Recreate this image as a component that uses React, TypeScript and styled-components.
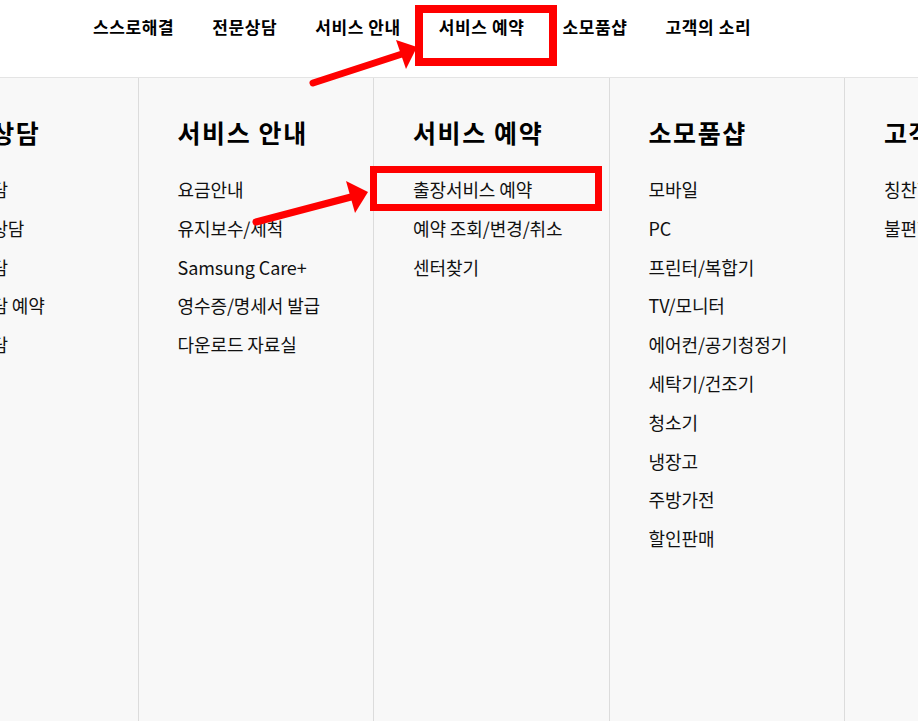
import React from 'react';
import styled, { createGlobalStyle } from 'styled-components';

const GlobalStyle = createGlobalStyle`
    html, body {
        margin: 0;
        padding: 0;
        height: 100%;
        overflow: hidden;
        background: #fff;
    }
    body {
        font-family: "Noto Sans CJK KR", "Noto Sans", sans-serif;
        color: #000;
    }
    #root {
        height: 100%;
    }
`;

const Page = styled.div`
    position: relative;
    height: 100%;
    display: flex;
    flex-direction: column;
`;

const TopNav = styled.nav`
    height: 77px;
    flex: none;
    display: flex;
    align-items: flex-start;
    padding-left: 74px;
    border-bottom: 1px solid #e4e4e4;
    box-sizing: content-box;
`;

const NavItem = styled.a`
    display: block;
    padding: 14px 19px 0;
    font-size: 17px;
    font-weight: 700;
    line-height: 26px;
    letter-spacing: 0.6px;
    color: #000;
    white-space: nowrap;
`;

const Panel = styled.div`
    flex: 1;
    display: flex;
    background: #f8f8f8;
    margin-left: -97px;
    overflow: hidden;
`;

const Column = styled.div`
    flex: none;
    width: 235.5px;
    box-sizing: border-box;
    border-right: 1px solid #dcdcdc;
    padding: 37px 0 0 39px;
    white-space: nowrap;
`;

const Heading = styled.h2`
    margin: 0;
    font-size: 25px;
    font-weight: 700;
    line-height: 34px;
    letter-spacing: 1.6px;
`;

const LinkList = styled.ul`
    list-style: none;
    margin: 21px 0 0;
    padding: 0;
`;

const LinkItem = styled.li`
    font-size: 18px;
    line-height: 38.8px;
    letter-spacing: -0.1px;
    color: #111;
`;

const Overlay = styled.svg`
    position: absolute;
    left: 0;
    top: 0;
    width: 918px;
    height: 721px;
    pointer-events: none;
`;

const columns = [
    { title: '전문상담', links: ['전화상담', '이메일상담', '채팅상담', '화상상담 예약', '원격상담'] },
    { title: '서비스 안내', links: ['요금안내', '유지보수/세척', 'Samsung Care+', '영수증/명세서 발급', '다운로드 자료실'] },
    { title: '서비스 예약', links: ['출장서비스 예약', '예약 조회/변경/취소', '센터찾기'] },
    {
        title: '소모품샵',
        links: ['모바일', 'PC', '프린터/복합기', 'TV/모니터', '에어컨/공기청정기', '세탁기/건조기', '청소기', '냉장고', '주방가전', '할인판매'],
    },
    { title: '고객의 소리', links: ['칭찬합니다', '불편합니다'] },
];

const navItems = ['스스로해결', '전문상담', '서비스 안내', '서비스 예약', '소모품샵', '고객의 소리'];

const Annotations: React.FC = () => (
    <Overlay viewBox="0 0 918 721">
        <rect x="419" y="9" width="134" height="53" fill="none" stroke="#f00" strokeWidth="8" />
        <rect x="373.5" y="169.5" width="225" height="38" fill="none" stroke="#f00" strokeWidth="7" />
        <line x1="313" y1="83" x2="402" y2="54" stroke="#f00" strokeWidth="7" strokeLinecap="round" />
        <polygon points="396,40 417,47 406,69" fill="#f00" />
        <line x1="256" y1="222" x2="351" y2="197" stroke="#f00" strokeWidth="7" strokeLinecap="round" />
        <polygon points="346,181 368,192 355,213" fill="#f00" />
    </Overlay>
);

const App: React.FC = () => (
    <Page>
        <GlobalStyle />
        <TopNav>
            {navItems.map((item) => (
                <NavItem key={item}>{item}</NavItem>
            ))}
        </TopNav>
        <Panel>
            {columns.map((col) => (
                <Column key={col.title}>
                    <Heading>{col.title}</Heading>
                    <LinkList>
                        {col.links.map((link) => (
                            <LinkItem key={link}>{link}</LinkItem>
                        ))}
                    </LinkList>
                </Column>
            ))}
        </Panel>
        <Annotations />
    </Page>
);

export default App;
